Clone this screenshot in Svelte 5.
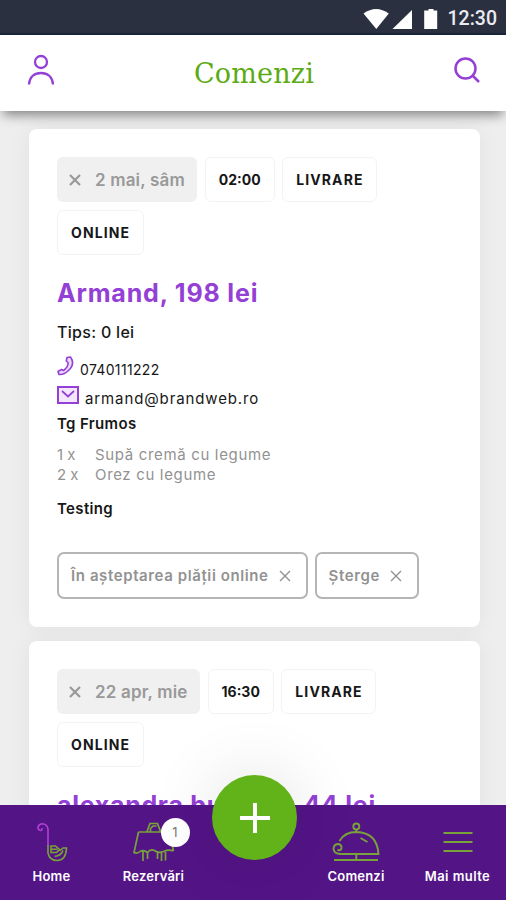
<script>
  const orders = [
    {
      date: '2 mai, sâm',
      time: '02:00',
      tags: ['LIVRARE', 'ONLINE'],
      title: 'Armand, 198 lei',
      tips: 'Tips: 0 lei',
      phone: '0740111222',
      email: 'armand@brandweb.ro',
      city: 'Tg Frumos',
      items: [
        ['1 x', 'Supă cremă cu legume'],
        ['2 x', 'Orez cu legume']
      ],
      note: 'Testing',
      actions: ['În așteptarea plății online', 'Șterge']
    },
    {
      date: '22 apr, mie',
      time: '16:30',
      tags: ['LIVRARE', 'ONLINE'],
      title: 'alexandra burlacu, 44 lei'
    }
  ];
</script>

{#snippet cross(size, width)}
  <svg width={size} height={size} viewBox="0 0 12 12" fill="none" stroke="currentColor" stroke-width={width}>
    <path d="M1 1 11 11M11 1 1 11" />
  </svg>
{/snippet}

<div class="screen">
  <div class="status">
    <svg width="78" height="22" viewBox="361 8 78 22" fill="#fff">
      <path d="M363.500 13.500Q376 4.500 388.800 13.500L376.300 29Z" />
      <path d="M412 10V29H392.500Z" />
      <path d="M428.500 9h5v1.600h3.700V29h-13V10.600h4.300Z" />
    </svg>
    <span class="time">12:30</span>
  </div>

  <header>
    <svg width="28" height="32" viewBox="0 0 28 32" fill="none" stroke="#9440d6" stroke-width="2.300">
      <circle cx="14" cy="8" r="6" />
      <path d="M2 30.500C2.500 23 7.500 19 14 19S25.500 23 26 30.500" />
    </svg>
    <h1>Comenzi</h1>
    <svg width="28" height="28" viewBox="0 0 28 28" fill="none" stroke="#9440d6" stroke-width="2.500">
      <circle cx="12.500" cy="12.500" r="10" />
      <path d="M19.500 19.500 26 26" />
    </svg>
  </header>

  <main>
    {#each orders as order}
      <article>
        <div class="tags">
          <span class="date">{@render cross(12, 2.2)}<span>{order.date}</span></span>
          <span class="tag">{order.time}</span>
          {#each order.tags as tag}<span class="tag word">{tag}</span>{/each}
        </div>
        <h2>{order.title}</h2>
        {#if order.tips}
          <p class="tips">{order.tips}</p>
          <div class="phone">
            <svg width="17" height="20" viewBox="0 0 17 20" fill="#ead8f8" stroke="#9440d6" stroke-width="1.600" stroke-linejoin="round">
              <path d="M10 1.500 13.500 1Q18.500 8 11.500 14.500Q7 19 2 18.500L1 15.500 4.500 13.500 6.500 14.500Q11.500 11 11 6.500L9.300 5Z" />
            </svg>
            <span>{order.phone}</span>
          </div>
          <div class="email">
            <svg width="22" height="18" viewBox="0 0 22 18" fill="#f3e8fb" stroke="#9440d6" stroke-width="2">
              <rect x="1" y="1" width="20" height="16" />
              <path d="M5 5 11 10.500 17 5" fill="none" stroke-width="1.700" />
            </svg>
            <span>{order.email}</span>
          </div>
          <p class="city">{order.city}</p>
          <div class="items">
            {#each order.items as [count, name]}
              <span>{count}</span><span class="name">{name}</span>
            {/each}
          </div>
          <p class="note">{order.note}</p>
          <div class="actions">
            {#each order.actions as action}
              <button><span>{action}</span>{@render cross(12, 1.4)}</button>
            {/each}
          </div>
        {/if}
      </article>
    {/each}
  </main>

  <nav>
    <div class="tab home">
      <svg width="32" height="42" viewBox="35.500 820 32 42" fill="none" stroke="#79a33a" stroke-width="1.600">
        <path stroke="#b23fd6" d="M41.500 828Q42 830.500 40 830.500Q37 829.500 37.500 827Q38.500 823.800 42 823.800Q47.500 824.500 47.500 830.500V846" />
        <path d="M47.500 845V853Q49 860.500 57 860.500Q65.500 860 66 848H62.500L59 851M62.500 850.500Q61 855.500 54 856.500M50.500 846H55L59 849.500 56 852.500H50.500ZM51 849.300H57" />
      </svg>
      <span>Home</span>
    </div>
    <div class="tab booking">
      <svg width="44" height="42" viewBox="131.500 820 44 42" fill="none" stroke="#79a33a" stroke-width="1.700">
        <path d="M146.500 831.500 149.500 823.500H157L160 831.500M150 831.500V828.500L152.500 826H156M138 832H169L173 851M138 832 133.500 852.500Q137 854 139.500 851.500Q143 849.500 147 852.500Q150 848.500 154 850.500Q158 853.500 163 851.500Q168 849 173 851M142.500 851V861M147 852.500V859M157 852.500V859M161 853V861M165 852V860.500" />
      </svg>
      <span>Rezervări</span>
      <span class="badge">1</span>
    </div>
    <div class="tab orders">
      <svg width="50" height="42" viewBox="331 820 50 42" fill="none" stroke="#79a33a" stroke-width="1.900">
        <circle cx="356.300" cy="826.500" r="3" />
        <path d="M356.300 829.500V832M339.500 841Q344.500 832 356.500 832Q377 832.500 378.500 854H340Q333.500 853.500 333.500 848.500Q334 844 338.500 844Q342 845 341.500 848.500Q340 851.500 337.500 849.500M334 860H378M356.300 854V860M360.500 838 367.500 842" />
      </svg>
      <span>Comenzi</span>
    </div>
    <div class="tab more">
      <svg width="30" height="42" viewBox="443 820 30 42" stroke="#79a33a" stroke-width="2">
        <path d="M443.500 833H472.500M443.500 842H472.500M443.500 851H472.500" />
      </svg>
      <span>Mai multe</span>
    </div>
    <div class="fab">
      <svg width="30" height="30" viewBox="0 0 30 30" stroke="#fff" stroke-width="4"><path d="M0 15H30M15 0V30" /></svg>
    </div>
  </nav>
</div>

<style>
  .screen {
    display: flex;
    flex-direction: column;
    width: 506px;
    height: 900px;
    overflow: hidden;
    background: #eee;
    color: #171717;
    font-family: Inter, 'Open Sans', sans-serif;
  }
  h1, h2, p { margin: 0; }
  svg { display: block; flex: none; }
  .status {
    display: flex;
    flex: none;
    align-items: center;
    justify-content: flex-end;
    box-sizing: border-box;
    height: 35px;
    padding: 5px 9px 0 0;
    border-bottom: 2px solid #17263a;
    background: #2b3040;
  }
  .time {
    margin-left: 9px;
    color: #e9ebf0;
    font: 500 19.500px/24px Roboto, sans-serif;
  }
  header {
    position: relative;
    z-index: 1;
    display: flex;
    flex: none;
    align-items: center;
    justify-content: space-between;
    box-sizing: border-box;
    height: 76px;
    padding: 0 25px 6px 27px;
    background: #fff;
    box-shadow: 0 7px 11px -3px rgba(0, 0, 0, 0.45);
  }
  h1 {
    padding-top: 7px;
    color: #5bab14;
    font: 400 27px/34px 'DejaVu Serif', serif;
    letter-spacing: 0.200px;
  }
  main {
    display: flex;
    flex: 1;
    flex-direction: column;
    gap: 14px;
    min-height: 0;
    padding: 18px 26px 0 29px;
    overflow: hidden;
  }
  article {
    flex: none;
    box-sizing: border-box;
    height: 498px;
    padding: 28px;
    border-radius: 8px;
    background: #fff;
    box-shadow: 0 0 22px rgba(0, 0, 0, 0.055);
  }
  .tags {
    display: flex;
    flex-wrap: wrap;
    gap: 8px 7.500px;
  }
  .date, .tag {
    display: flex;
    align-items: center;
    box-sizing: border-box;
    height: 45px;
    border-radius: 6px;
  }
  .date {
    gap: 14px;
    padding: 0 12.500px 0 12px;
    background: #f0f0f0;
    color: #999;
    font-size: 17px;
    font-weight: 600;
    letter-spacing: 0.170px;
  }
  .tag {
    padding: 0 13px;
    border: 1px solid #f3f3f3;
    font-size: 14px;
    font-weight: 700;
  }
  .word { padding-right: 12.500px; letter-spacing: 1.100px; }
  h2 {
    margin-top: 22px;
    color: #9440d6;
    font-size: 25px;
    font-weight: 700;
    line-height: 32px;
    letter-spacing: 0.830px;
    white-space: nowrap;
  }
  article + article h2 { letter-spacing: 0.700px; }
  .tips {
    margin-top: 13px;
    font-size: 16px;
    font-weight: 500;
    line-height: 20px;
    letter-spacing: 0.300px;
  }
  .phone, .email {
    display: flex;
    align-items: center;
    gap: 6px;
    line-height: 20px;
  }
  .phone span, .email span { padding-top: 8px; }
  .phone {
    height: 20px;
    margin-top: 14px;
    font-size: 14px;
    letter-spacing: 0.330px;
  }
  .email {
    height: 18px;
    margin-top: 10px;
    font-size: 15px;
    letter-spacing: 0.880px;
  }
  .city, .note {
    font-size: 15px;
    font-weight: 600;
    line-height: 20px;
    letter-spacing: 0.350px;
  }
  .city { margin-top: 10px; }
  .items {
    display: grid;
    grid-template-columns: 38px 1fr;
    margin-top: 11px;
    color: #929292;
    font-size: 15px;
    line-height: 20px;
  }
  .name { letter-spacing: 0.660px; }
  .note { margin-top: 14px; }
  .actions { display: flex; gap: 7px; margin-top: 33px; }
  button {
    display: flex;
    align-items: center;
    gap: 10px;
    box-sizing: border-box;
    height: 47px;
    padding: 0 15px 0 12px;
    border: 2px solid #b5b5b5;
    border-radius: 7px;
    background: #fff;
    color: #929292;
    font: 600 15px/20px Inter, sans-serif;
    letter-spacing: 0.600px;
    white-space: nowrap;
  }
  nav {
    position: relative;
    z-index: 2;
    flex: none;
    display: grid;
    grid-template-columns: 103px 101px 103px 98px 105px;
    box-sizing: border-box;
    height: 95px;
    padding-top: 15px;
    background: #531486;
    color: #fff;
    font-size: 13px;
    font-weight: 600;
    letter-spacing: 0.200px;
  }
  .tab {
    position: relative;
    display: flex;
    flex-direction: column;
    align-items: center;
    gap: 6px;
    line-height: 17px;
  }
  .orders { grid-column: 4; }
  .more { letter-spacing: 0.420px; }
  .badge {
    position: absolute;
    top: -2px;
    left: 57.500px;
    width: 29px;
    height: 29px;
    border-radius: 50%;
    background: #fff;
    color: #777;
    font-weight: 400;
    line-height: 29px;
    text-align: center;
  }
  .fab {
    position: absolute;
    top: -30px;
    left: 212px;
    display: grid;
    place-items: center;
    width: 85px;
    height: 85px;
    border-radius: 50%;
    background: #61b319;
    box-shadow: 0 0 70px rgba(0, 0, 0, 0.120);
  }
</style>
